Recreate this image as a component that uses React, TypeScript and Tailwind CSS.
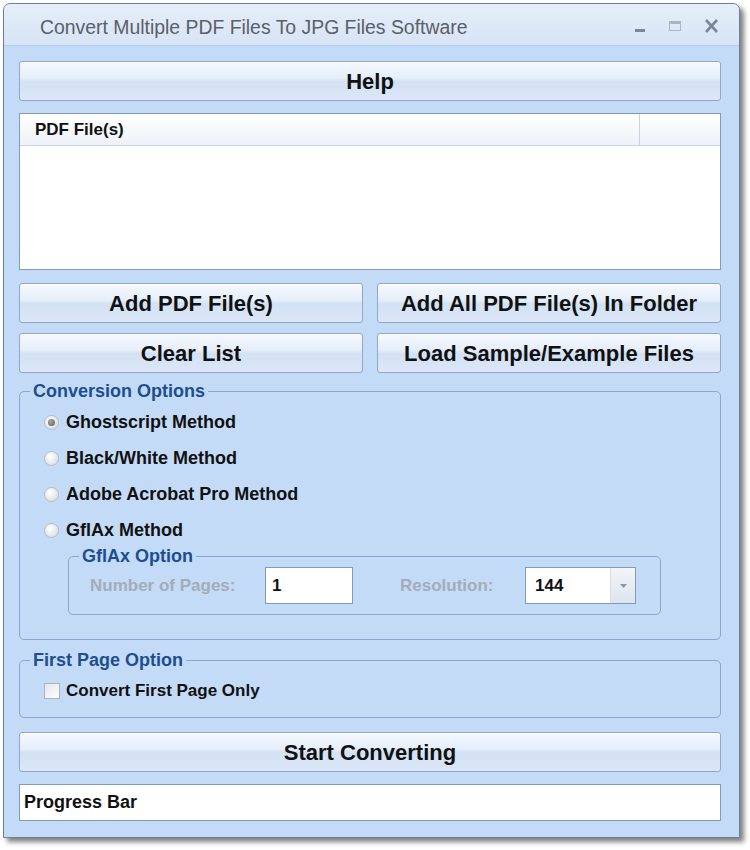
import React from 'react';

const font = { fontFamily: '"Liberation Sans", Arial, sans-serif' };

function WinButton({ label, className = '' }: { label: string; className?: string }) {
  return (
    <button
      type="button"
      className={`h-[40px] rounded-[3px] border border-[#8fa8c8] bg-[linear-gradient(to_bottom,#f5f9fe_0%,#e6eefa_42%,#d2e1f4_52%,#dbe7f7_100%)] text-[22px] font-bold text-[#111] shadow-[inset_0_1px_0_#ffffff] ${className}`}
    >
      {label}
    </button>
  );
}

function Radio({ label, checked = false }: { label: string; checked?: boolean }) {
  return (
    <label className="flex h-[36px] items-center">
      <span className="flex h-[15px] w-[15px] items-center justify-center rounded-full border border-[#b4bcc6] bg-[radial-gradient(circle_at_40%_35%,#ffffff_0%,#e4e7eb_60%,#cfd4da_100%)]">
        {checked && <span className="h-[7px] w-[7px] rounded-full bg-[radial-gradient(circle_at_40%_35%,#a8a8a8,#5c5c5c)]" />}
      </span>
      <span className="ml-[7px] text-[18px] font-bold text-[#111]">{label}</span>
    </label>
  );
}

function Group({
  title,
  className = '',
  children,
}: {
  title: string;
  className?: string;
  children: React.ReactNode;
}) {
  return (
    <fieldset className={`rounded-[5px] border border-[#8ba6cb] ${className}`}>
      <legend className="ml-[10px] px-[3px] text-[18px] font-bold leading-[20px] text-[#1d4f8f]">{title}</legend>
      {children}
    </fieldset>
  );
}

export default function App() {
  return (
    <div className="h-[850px] w-[750px] bg-white pl-[3px] pt-[3px]" style={font}>
      <div className="flex h-[835px] w-[737px] flex-col rounded-t-[7px] border border-[#6a7f99] bg-[#c4dbf8] shadow-[4px_4px_5px_rgba(0,0,0,0.5)]">
        {/* title bar */}
        <div className="flex h-[42px] items-center rounded-t-[6px] border-b border-[#b5cbe6] bg-[linear-gradient(to_bottom,#e6eef9,#d6e4f6)] pl-[36px] pr-[20px]">
          <span className="flex-1 pt-[6px] text-[19.4px] text-[#5b5f66]">Convert Multiple PDF Files To JPG Files Software</span>
          <div className="flex items-center gap-[22px] pt-[2px]">
            <svg width="12" height="14" viewBox="0 0 12 14">
              <rect x="1" y="10" width="10" height="3" fill="#7b8799" />
            </svg>
            <svg width="14" height="14" viewBox="0 0 14 14">
              <rect x="1.5" y="2.5" width="11" height="9" fill="none" stroke="#aab6c6" strokeWidth="1" />
              <rect x="1.5" y="2.5" width="11" height="2.5" fill="#aab6c6" />
            </svg>
            <svg width="15" height="14" viewBox="0 0 15 14">
              <path d="M2 1 L13 13 M13 1 L2 13" stroke="#7b8799" strokeWidth="2.6" />
            </svg>
          </div>
        </div>

        <div className="flex flex-col pl-[15px] pr-[18px] pt-[15px]">
          <WinButton label="Help" className="w-full" />

          {/* file list */}
          <div className="mt-[12px] h-[157px] border border-[#7f9db9] bg-white">
            <div className="flex h-[32px] border-b border-[#c9d5e4] bg-[linear-gradient(to_bottom,#ffffff,#edf2f8)]">
              <div className="flex w-[620px] items-center border-r border-[#c9d3de] pl-[15px] text-[17px] font-bold text-[#111]">
                PDF File(s)
              </div>
            </div>
          </div>

          <div className="mt-[13px] grid grid-cols-2 gap-x-[14px] gap-y-[10px]">
            <WinButton label="Add PDF File(s)" />
            <WinButton label="Add All PDF File(s) In Folder" />
            <WinButton label="Clear List" />
            <WinButton label="Load Sample/Example Files" />
          </div>

          <Group title="Conversion Options" className="mt-[8px] h-[259px]">
            <div className="flex flex-col pl-[24px] pt-[3px]">
              <Radio label="Ghostscript Method" checked />
              <Radio label="Black/White Method" />
              <Radio label="Adobe Acrobat Pro Method" />
              <Radio label="GflAx Method" />
            </div>
            <Group title="GflAx Option" className="ml-[48px] mt-[-2px] h-[69px] w-[593px]">
              <div className="flex items-center pl-[21px] pt-[1px]">
                <span className="w-[175px] text-[17px] font-bold text-[#a3acb8]">Number of Pages:</span>
                <div className="flex h-[37px] w-[88px] items-center border border-[#7f9db9] bg-white pl-[6px] text-[17px] font-bold text-[#111]">
                  1
                </div>
                <span className="ml-[47px] w-[125px] text-[17px] font-bold text-[#a3acb8]">Resolution:</span>
                <div className="flex h-[37px] w-[111px] border border-[#7f9db9] bg-white">
                  <span className="flex flex-1 items-center pl-[9px] text-[17px] font-bold text-[#111]">144</span>
                  <span className="flex w-[25px] items-center justify-center border-l border-[#d5dde8] bg-[linear-gradient(to_bottom,#f2f5f9,#dde4ee)]">
                    <svg width="7" height="4" viewBox="0 0 7 4">
                      <path d="M0 0 H7 L3.5 4 Z" fill="#8a97a8" />
                    </svg>
                  </span>
                </div>
              </div>
            </Group>
          </Group>

          <Group title="First Page Option" className="mt-[10px] h-[68px]">
            <label className="flex items-center pl-[24px] pt-[8px]">
              <span className="h-[16px] w-[16px] border border-[#a9b3c0] bg-[linear-gradient(135deg,#e2e6ea,#ffffff)]" />
              <span className="ml-[6px] text-[17px] font-bold text-[#111]">Convert First Page Only</span>
            </label>
          </Group>

          <WinButton label="Start Converting" className="mt-[14px] w-full" />

          <div className="mt-[12px] flex h-[37px] items-center border border-[#7f9db9] bg-white pl-[4px] text-[18px] font-bold text-[#111]">
            Progress Bar
          </div>
        </div>
      </div>
    </div>
  );
}
